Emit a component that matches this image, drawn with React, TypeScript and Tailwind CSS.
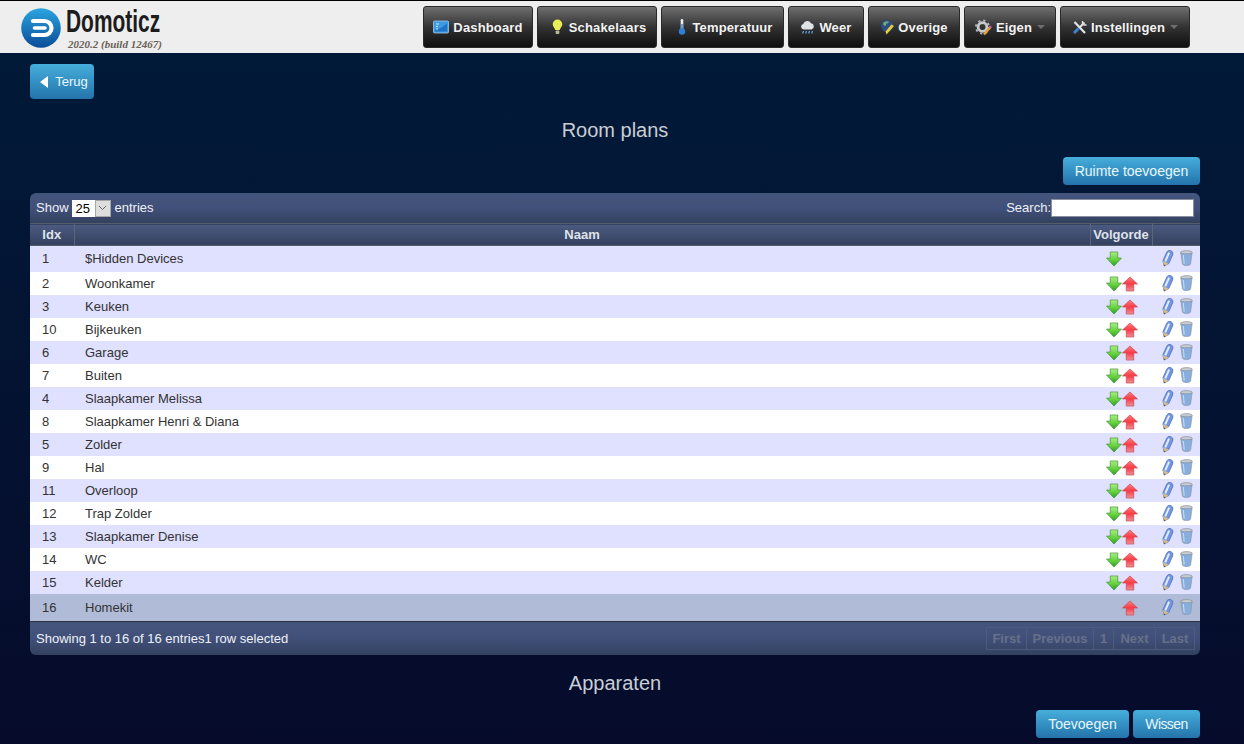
import React from "react";

const Down = () => (
  <svg width="17" height="16" viewBox="0 0 17 16" className="block">
    <defs>
      <linearGradient id="gd" x1="0" y1="0" x2="0" y2="1">
        <stop offset="0" stopColor="#a8ee80" />
        <stop offset="0.55" stopColor="#66d23f" />
        <stop offset="1" stopColor="#2f9a24" />
      </linearGradient>
    </defs>
    <path d="M4.500 0.500h8v6.500h4L8.500 15.500 0.500 7h4z" fill="url(#gd)" stroke="#3f8f35" strokeWidth="0.7" strokeLinejoin="round" />
  </svg>
);

const Up = () => (
  <svg width="17" height="16" viewBox="0 0 17 16" className="block">
    <defs>
      <linearGradient id="gu" x1="0" y1="0" x2="0" y2="1">
        <stop offset="0" stopColor="#f78080" />
        <stop offset="0.5" stopColor="#f93a46" />
        <stop offset="1" stopColor="#ea939b" />
      </linearGradient>
    </defs>
    <path d="M8.500 0.500L16.500 8h-4v7.500h-8V8h-4z" fill="url(#gu)" stroke="#c9434c" strokeWidth="0.7" strokeLinejoin="round" />
  </svg>
);

const Pencil = () => (
  <svg width="13" height="17" viewBox="0 0 13 17" className="block">
    <g transform="rotate(24 6.500 8.500)">
      <path d="M3.200 3.200a3.300 3.300 0 0 1 6.600 0v9.300L6.500 16.800 3.200 12.500z" fill="#7396e0" stroke="#456ab5" strokeWidth="0.6" />
      <path d="M5.600 2.500v9.500" stroke="#e6edfb" strokeWidth="2" />
      <path d="M3.300 12.700h6.400L6.500 16.800z" fill="#d9bb8c" />
      <path d="M5.600 15.500h1.800L6.500 16.800z" fill="#4a3a22" />
    </g>
  </svg>
);

const Trash = () => (
  <svg width="13" height="16" viewBox="0 0 13 16" className="block">
    <ellipse cx="6.500" cy="2.400" rx="5.800" ry="1.800" fill="#c7ccd2" stroke="#7d858d" strokeWidth="0.6" />
    <path d="M0.900 3l1.500 11c.3.900 1.700 1.500 4.100 1.500s3.800-.6 4.100-1.500l1.500-11c-1.500 1-10.100 1-11.700 0z" fill="#87aedd" stroke="#8b949c" strokeWidth="0.6" />
    <path d="M3.300 5l.9 8.800" stroke="#c7dcf3" strokeWidth="1.100" />
  </svg>
);

const Logo = () => (
  <svg width="40" height="40" viewBox="0 0 40 40" className="block">
    <defs>
      <linearGradient id="lg" x1="0" y1="0" x2="0" y2="1">
        <stop offset="0" stopColor="#2aa5e0" />
        <stop offset="1" stopColor="#0a4c98" />
      </linearGradient>
    </defs>
    <circle cx="20" cy="20" r="19.800" fill="url(#lg)" />
    <path d="M12 13H23.500a7 7 0 0 1 0 14H12" fill="none" stroke="#fff" strokeWidth="4.200" strokeLinecap="round" />
    <path d="M13.500 20H24" fill="none" stroke="#fff" strokeWidth="3.600" strokeLinecap="round" />
  </svg>
);

const DashIcon = () => (
  <svg width="16" height="14" viewBox="0 0 16 14" className="block">
    <rect x="0.500" y="1" width="15" height="12" rx="1" fill="#3a9be4" stroke="#9cc8ea" strokeWidth="0.800" />
    <path d="M2 9.500c4 0 8-3 12-6v8H2z" fill="#1f74c4" />
    <path d="M3 4h3M3 6.500h2M3 9h2" stroke="#d6ecfb" strokeWidth="1" />
  </svg>
);
const Bulb = () => (
  <svg width="17" height="16" viewBox="-3 0 17 16" className="block">
    <path d="M6.500 0.500a4.800 4.800 0 0 0-4.800 4.800c0 2.200 1.900 3.400 2.600 5.700h4.400c.7-2.300 2.600-3.500 2.600-5.700A4.800 4.800 0 0 0 6.500 0.500z" fill="#e6ed58" />
    <rect x="4.700" y="11.500" width="3.600" height="3.500" rx="0.800" fill="#b9b9a0" />
  </svg>
);
const Thermo = () => (
  <svg width="15" height="18" viewBox="-5 0 15 18" className="block">
    <rect x="3.700" y="1" width="2.600" height="11" rx="1.300" fill="#e8eef5" />
    <rect x="4.300" y="6" width="1.400" height="6" fill="#2e7fd6" />
    <circle cx="5" cy="13.500" r="3.200" fill="#2e7fd6" />
  </svg>
);
const Cloud = () => (
  <svg width="15" height="16" viewBox="0 0 15 16" className="block">
    <path d="M3.500 10.500a2.800 2.800 0 0 1-.3-5.500A4.200 4.200 0 0 1 11 4.300a3.200 3.200 0 0 1 .7 6.200z" fill="#dfe2e6" />
    <path d="M3.500 12l-.8 2.500M6.500 12l-.8 2.500M9.500 12l-.8 2.500M12.500 12l-.8 2.500" stroke="#5fa6e0" strokeWidth="1.200" />
  </svg>
);
const Globe = () => (
  <svg width="15" height="16" viewBox="0 0 15 16" className="block">
    <circle cx="7" cy="7" r="6" fill="#2b4d80" />
    <path d="M3 4c2-2 5-2 6-1-1 2-3 1-3 3S3 7 3 4z" fill="#6fa780" />
    <path d="M5.500 12.500l1 3 7.500-8.500-2.500-1.500z" fill="#e6cf3a" />
  </svg>
);
const Gear = () => (
  <svg width="17" height="17" viewBox="0 0 17 17" className="block">
    <circle cx="7.500" cy="8" r="4.400" fill="none" stroke="#c7c9cc" strokeWidth="2.800" />
    <circle cx="7.500" cy="8" r="6.500" fill="none" stroke="#b5b7ba" strokeWidth="2" strokeDasharray="2.200 2.900" />
    <path d="M9 15.500L15.500 8" stroke="#e0a23a" strokeWidth="2.400" />
    <path d="M14.500 9L16 7.200" stroke="#d65fa0" strokeWidth="2.400" />
  </svg>
);
const Tools = () => (
  <svg width="15" height="15" viewBox="0 0 15 15" className="block">
    <path d="M2.500 2l10.500 11" stroke="#dfe2e6" strokeWidth="2.200" />
    <path d="M12.500 2.500L7.500 7.500" stroke="#dfe2e6" strokeWidth="2" />
    <path d="M6.500 8.500L2 13" stroke="#3f82d6" strokeWidth="2.800" />
    <path d="M10.500 1l0 2.500 1.500 1.500 2.500 0" stroke="#dfe2e6" strokeWidth="1.400" fill="none" />
  </svg>
);

const nav: [string, number, React.ReactNode, number, boolean?][] = [
  ["Dashboard", 110, <DashIcon />, 4],
  ["Schakelaars", 120, <Bulb />, 4],
  ["Temperatuur", 123, <Thermo />, 5],
  ["Weer", 76, <Cloud />, 4],
  ["Overige", 92, <Globe />, 3],
  ["Eigen", 92, <Gear />, 4, true],
  ["Instellingen", 130, <Tools />, 4, true],
];

const rows: [string, string][] = [
  ["1", "$Hidden Devices"],
  ["2", "Woonkamer"],
  ["3", "Keuken"],
  ["10", "Bijkeuken"],
  ["6", "Garage"],
  ["7", "Buiten"],
  ["4", "Slaapkamer Melissa"],
  ["8", "Slaapkamer Henri & Diana"],
  ["5", "Zolder"],
  ["9", "Hal"],
  ["11", "Overloop"],
  ["12", "Trap Zolder"],
  ["13", "Slaapkamer Denise"],
  ["14", "WC"],
  ["15", "Kelder"],
  ["16", "Homekit"],
];

const blueBtn =
  "rounded-[4px] bg-gradient-to-b from-[#46aedb] to-[#2474ab] text-[#e8f6fc] text-[14px] leading-none flex items-center justify-center";

const barBg = "bg-gradient-to-b from-[#44557c] via-[#41507a] to-[#33415f]";

export default function App() {
  return (
    <div className="w-[1244px] h-[744px] overflow-hidden bg-gradient-to-b from-[#001b39] to-[#060b2b] font-['Liberation_Sans',Arial,sans-serif]">
      <header className="h-[53px] bg-[#eeeeee] border-t border-black flex">
        <div className="ml-[21px] mt-[7px] w-[40px]">
          <Logo />
        </div>
        <div className="ml-[5px] w-[120px]">
          <div className="origin-left scale-x-[0.675] font-bold text-[#1c1c1c] text-[31px] leading-[32px] mt-[5px] whitespace-nowrap">
            Domoticz
          </div>
          <div className="font-['Liberation_Serif',serif] italic font-bold text-[#6a6058] text-[11px] leading-[12px] ml-[2px] whitespace-nowrap">
            2020.2 (build 12467)
          </div>
        </div>
        <nav className="ml-[237px] mt-[5px] flex gap-[4px]">
          {nav.map(([label, w, icon, gap, caret]) => (
            <div
              key={label}
              style={{ width: w, gap }}
              className="h-[42px] rounded-[3px] border border-[#2a2a2a] bg-gradient-to-b from-[#707070] via-[#333333] to-[#0f0f0f] flex items-center justify-center text-[#f2f2f2] text-[13px] font-bold whitespace-nowrap"
            >
              <span className="shrink-0">{icon}</span>
              <span className="tracking-[0.15px] pt-[1px]">{label}</span>
              {caret && (
                <span className="ml-[1px] w-0 h-0 border-x-[4px] border-x-transparent border-t-[4px] border-t-[#6e6e6e]" />
              )}
            </div>
          ))}
        </nav>
      </header>

      <main className="pl-[30px] pr-[44px] text-[13px]">
        <div className={`${blueBtn} w-[64px] h-[35px] mt-[11px] gap-[7px] !text-[13px] pl-[4px]`}>
          <span className="w-0 h-0 border-y-[6px] border-y-transparent border-r-[8px] border-r-white" />
          <span>Terug</span>
        </div>

        <h1 className="text-center text-[20px] leading-[24px] text-[#c9ced6] mt-[19px]">Room plans</h1>

        <div className="flex justify-end mt-[15px]">
          <div className={`${blueBtn} w-[137px] h-[28px]`}>Ruimte toevoegen</div>
        </div>

        <div className="mt-[8px] rounded-[6px] overflow-hidden">
          <div className={`${barBg} h-[30px] flex items-center justify-between px-[6px] text-[#eef1f6]`}>
            <div className="flex items-center">
              <span>Show</span>
              <span className="ml-[3px] flex h-[17px] w-[39px] bg-white text-black text-[13px] items-center">
                <span className="pl-[4px] pt-[1px] w-[23px]">25</span>
                <span className="w-[16px] h-full bg-[#dddddd] border border-[#a6a6a6] flex items-center justify-center">
                  <svg width="9" height="6" viewBox="0 0 9 6">
                    <path d="M1 1l3.500 3.500L8 1" fill="none" stroke="#666" strokeWidth="1" />
                  </svg>
                </span>
              </span>
              <span className="ml-[4px]">entries</span>
            </div>
            <div className="flex items-center">
              <span>Search:</span>
              <span className="block w-[143px] h-[18px] bg-white border border-[#8a90a0]" />
            </div>
          </div>

          <table className="w-full table-fixed border-collapse text-[13px]">
            <thead>
              <tr className="h-[21px] bg-gradient-to-b from-[#4b5a80] to-[#34415f] border-y border-[#555c6c] text-[#dfe3ea] font-bold">
                <th className="w-[44px] p-0 pt-[1px] font-bold border-r border-[#5d6679]">Idx</th>
                <th className="p-0 pt-[1px] font-bold border-r border-[#5d6679]">Naam</th>
                <th className="w-[62px] p-0 pt-[1px] font-bold border-r border-[#5d6679]">Volgorde</th>
                <th className="w-[48px] p-0" />
              </tr>
            </thead>
            <tbody>
              {rows.map(([idx, name], i) => {
                const last = i === rows.length - 1;
                const first = i === 0;
                const bg = last ? "bg-[#b0bcd7]" : i % 2 === 0 ? "bg-[#e0e0ff]" : "bg-white";
                const h = first || last ? "h-[27px]" : "h-[23px]";
                const pad = first ? "pt-0" : "pt-[1px]";
                return (
                  <tr key={idx} className={`${bg} ${h} text-[#333333]`}>
                    <td className={`p-0 pl-[12px] ${pad}`}>{idx}</td>
                    <td className={`p-0 pl-[11px] ${pad}`}>{name}</td>
                    <td className="p-0">
                      <div className="flex justify-center pt-[1px] pl-[2px]">
                        <span className="w-[16px] flex justify-center">{!last && <Down />}</span>
                        <span className="w-[16px] flex justify-center">{!first && <Up />}</span>
                      </div>
                    </td>
                    <td className="p-0">
                      <div className="flex pl-[9px] gap-[6px]">
                        <Pencil />
                        <Trash />
                      </div>
                    </td>
                  </tr>
                );
              })}
            </tbody>
          </table>

          <div className={`${barBg} h-[34px] border-t border-[#2b3040] flex items-center justify-between px-[6px] text-[#eef1f6]`}>
            <span className="pt-[1px]">Showing 1 to 16 of 16 entries1 row selected</span>
            <div className="flex h-[23px] border border-[#4d5b7c] text-[13px] font-bold text-[#667089] -mr-[1px] pt-[1px]">
              <span className="flex items-center w-[40px] justify-center border-r border-[#4d5b7c]">First</span>
              <span className="flex items-center w-[67px] justify-center border-r border-[#4d5b7c]">Previous</span>
              <span className="flex items-center w-[20px] justify-center border-r border-[#4d5b7c]">1</span>
              <span className="flex items-center w-[42px] justify-center border-r border-[#4d5b7c]">Next</span>
              <span className="flex items-center w-[38px] justify-center">Last</span>
            </div>
          </div>
        </div>

        <h2 className="text-center text-[20px] leading-[24px] text-[#c9ced6] mt-[16px]">Apparaten</h2>

        <div className="flex justify-end gap-[4px] mt-[15px]">
          <div className={`${blueBtn} w-[93px] h-[28px]`}>Toevoegen</div>
          <div className={`${blueBtn} w-[67px] h-[28px] tracking-[-0.6px]`}>Wissen</div>
        </div>
      </main>
    </div>
  );
}
